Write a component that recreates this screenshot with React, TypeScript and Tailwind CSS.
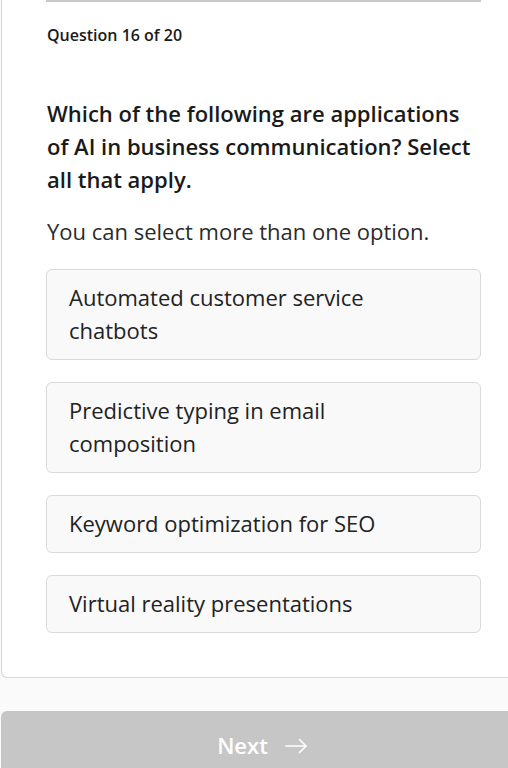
const options = [
  "Automated customer service chatbots",
  "Predictive typing in email composition",
  "Keyword optimization for SEO",
  "Virtual reality presentations",
];

export default function App() {
  return (
    <div className="min-h-screen bg-[#fafafa] overflow-hidden font-['Open_Sans',sans-serif] text-[#1a1a1a]">
      {/* Question card */}
      <div className="ml-px -mr-4 bg-white border-l border-b border-r border-[#d6d6d6] rounded-b-md pb-[44px]">
        <div className="ml-[44px] w-[435px] border-t-2 border-[#c8c8c8]" />
        <div className="pl-[44px] w-[479px]">
          <p className="mt-[23px] pl-px text-[16px] font-semibold leading-5">Question 16 of 20</p>
          <h1 className="mt-[52px] pl-px text-[22px] font-semibold leading-[33px]">
            Which of the following are applications of AI in business communication? Select all that apply.
          </h1>
          <p className="mt-[20px] pl-px text-[22px] leading-[30px] text-[#2b2b2b]">You can select more than one option.</p>
          <div className="mt-[23px] flex flex-col gap-[22px]">
            {options.map((o) => (
              <button
                key={o}
                className="text-left bg-[#f9f9f9] border border-[#d9d9d9] rounded-md pl-[22px] pr-[60px] pt-[11px] pb-[12px] text-[22px] leading-[33px] text-[#222]"
              >
                {o}
              </button>
            ))}
          </div>
        </div>
      </div>

      {/* Next button */}
      <div className="mt-[33px] ml-px -mr-4">
        <button className="w-full h-[68px] bg-[#c6c6c6] rounded-tl-md flex items-center justify-center gap-[17px] text-white text-[22px] font-semibold">
          <span>Next</span>
          <svg width="23" height="16" viewBox="0 0 23 16" fill="none" stroke="currentColor" strokeWidth="1.6" strokeLinecap="round" strokeLinejoin="round" className="mt-[2px]">
            <path d="M1 8h20" />
            <path d="M14.5 1.5L21 8l-6.5 6.5" />
          </svg>
        </button>
      </div>
    </div>
  );
}
